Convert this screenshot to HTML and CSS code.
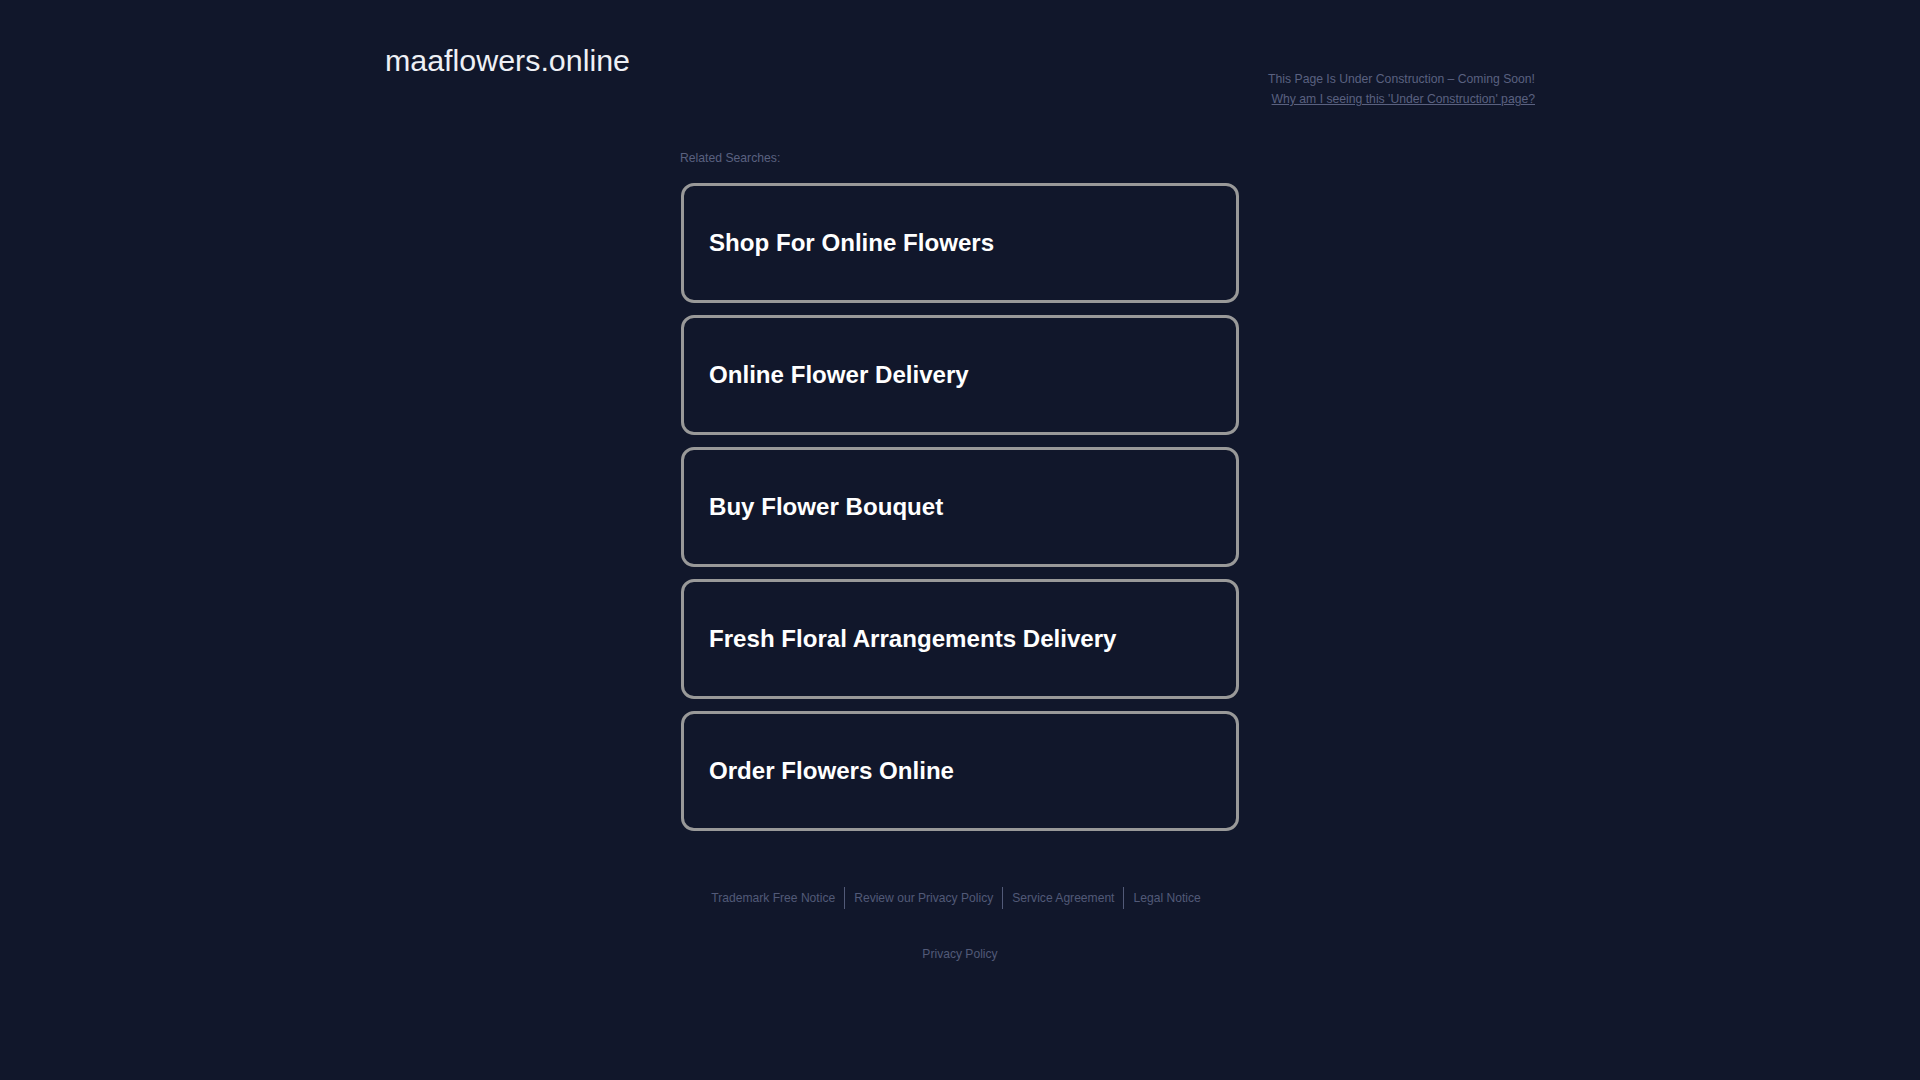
FILE: index.html
```html
<!DOCTYPE html>
<html lang="en">
<head>
<meta charset="utf-8">
<title>maaflowers.online</title>
<link rel="stylesheet" href="styles.css">
</head>
<body>
<div class="page">
  <header class="header">
    <div class="domain">maaflowers.online</div>
    <div class="notice">
      <div class="notice-line">This Page Is Under Construction – Coming Soon!</div>
      <a class="notice-link" href="#">Why am I seeing this 'Under Construction' page?</a>
    </div>
  </header>
  <main class="searches">
    <div class="searches-label">Related Searches:</div>
    <ul class="search-list">
      <li><a class="search-item" href="#">Shop For Online Flowers</a></li>
      <li><a class="search-item" href="#">Online Flower Delivery</a></li>
      <li><a class="search-item" href="#">Buy Flower Bouquet</a></li>
      <li><a class="search-item" href="#">Fresh Floral Arrangements Delivery</a></li>
      <li><a class="search-item" href="#">Order Flowers Online</a></li>
    </ul>
  </main>
  <footer class="footer">
    <nav class="footer-links">
      <a href="#">Trademark Free Notice</a>
      <a href="#">Review our Privacy Policy</a>
      <a href="#">Service Agreement</a>
      <a href="#">Legal Notice</a>
    </nav>
    <div class="footer-privacy"><a href="#">Privacy Policy</a></div>
  </footer>
</div>
</body>
</html>
```

FILE: styles.css
```css
html, body {
  margin: 0;
  padding: 0;
  background: #11172b;
  font-family: "Liberation Sans", Arial, sans-serif;
}

.page {
  min-height: 1080px;
}

.header {
  width: 1150px;
  margin: 0 auto;
  padding-top: 43px;
  display: flex;
  justify-content: space-between;
  align-items: flex-start;
}

.domain {
  font-size: 30.4px;
  line-height: 34px;
  color: #eef0f5;
}

.notice {
  margin-top: 26px;
  text-align: right;
  font-size: 12.2px;
  line-height: 20px;
  color: #5a6180;
}

.notice-line {
  display: block;
}

.notice-link {
  display: block;
  color: #5a6180;
  text-decoration: underline;
}

.searches {
  width: 558px;
  margin: 41px auto 0;
}

.searches-label {
  font-size: 12.2px;
  line-height: 16px;
  color: #5a6180;
  margin-bottom: 17px;
  margin-left: -1px;
}

.search-list {
  list-style: none;
  margin: 0;
  padding: 0;
  display: flex;
  flex-direction: column;
  gap: 12px;
}

.search-item {
  display: flex;
  align-items: center;
  box-sizing: border-box;
  height: 120px;
  padding: 0 25px;
  border: 3px solid #999999;
  border-radius: 13px;
  color: #ffffff;
  font-size: 24.1px;
  font-weight: bold;
  text-decoration: none;
}

.footer {
  margin-top: 56px;
  font-size: 12.1px;
}

.footer-links {
  display: flex;
  justify-content: center;
  padding-right: 8px;
}

.footer-links a {
  padding: 0 9px;
  line-height: 22px;
  color: #525a78;
  text-decoration: none;
}

.footer-links a + a {
  border-left: 1px solid #525a78;
}

.footer-privacy {
  margin-top: 37px;
  text-align: center;
  line-height: 16px;
}

.footer-privacy a {
  color: #525a78;
  text-decoration: none;
}
```
